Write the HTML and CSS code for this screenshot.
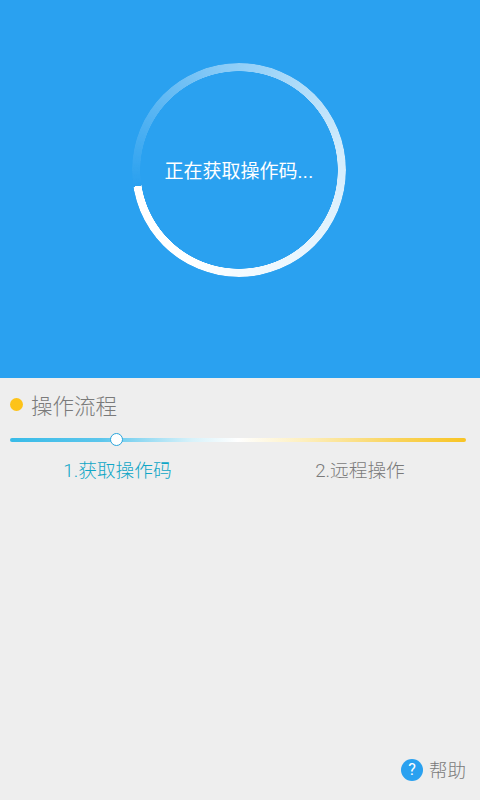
FILE: index.html
```html
<!DOCTYPE html>
<html lang="zh-CN">
<head>
  <meta charset="utf-8">
  <meta name="viewport" content="width=device-width,initial-scale=1" />
  <title>获取操作码</title>
  <link rel="stylesheet" href="styles.css">
</head>

<body>
  <div class="header">
    <div class="ring-box">
      <div class="ring"></div>
      <span class="ring-text">正在获取操作码<span class="dots">...</span></span>
    </div>
  </div>

  <div class="flow">
    <div class="flow-title">
      <span class="dot"></span>
      <span>操作流程</span>
    </div>
    <div class="track">
      <span class="thumb"></span>
    </div>
    <div class="steps">
      <span class="step active">1.获取操作码</span>
      <span class="step">2.远程操作</span>
    </div>
    <div class="help">
      <span class="help-icon">?</span>
      <span class="help-label">帮助</span>
    </div>
  </div>
</body>
</html>
```

FILE: styles.css
```css
html, body {
  height: 100%;
}

body {
  margin: 0;
  display: flex;
  flex-direction: column;
  font-family: Roboto, "Noto Sans CJK SC", sans-serif;
  font-weight: 300;
  background: #eeeeee;
  color: #7a7a7a;
}

.header {
  height: 378px;
  background: #2aa1f0;
  padding-top: 63px;
  box-sizing: border-box;
  display: flex;
  justify-content: center;
}

.ring-box {
  position: relative;
  width: 214px;
  height: 214px;
  margin-left: -2px;
  display: flex;
  align-items: center;
  justify-content: center;
}

.ring {
  position: absolute;
  inset: 0;
  border-radius: 50%;
  background: conic-gradient(from 261deg, rgba(255,255,255,0) 0%, rgba(255,255,255,0.45) 25%, rgba(255,255,255,0.8) 50%, #fff 85%, #fff 100%);
  -webkit-mask: radial-gradient(circle, transparent 98.5px, #000 99px);
  mask: radial-gradient(circle, transparent 98.5px, #000 99px);
}

.ring-text {
  padding-top: 4px;
  color: #fff;
  font-size: 19px;
  font-weight: 400;
  line-height: 24px;
  white-space: nowrap;
}

.dots {
  letter-spacing: 0.3px;
}

.flow {
  flex: 1;
  display: flex;
  flex-direction: column;
}

.flow-title {
  display: flex;
  align-items: center;
  height: 30px;
  margin-top: 11px;
  padding-left: 10px;
  font-size: 21.5px;
}

.dot {
  width: 13px;
  height: 13px;
  margin-top: 1px;
  margin-right: 8px;
  border-radius: 50%;
  background: #fdc319;
}

.track {
  position: relative;
  height: 4px;
  margin: 19px 14px 0 10px;
  border-radius: 2px;
  background: linear-gradient(to right, #38bbe8 0%, #5cc6ec 20%, #d8f2fa 40%, #ffffff 50%, #fdeebb 65%, #f9d35a 85%, #f8c424 100%);
}

.thumb {
  position: absolute;
  left: 100px;
  top: -5px;
  width: 11px;
  height: 11px;
  border: 1.5px solid #2aa5dc;
  border-radius: 50%;
  background: #fff;
}

.steps {
  display: grid;
  grid-template-columns: 215px 240px;
  column-gap: 15px;
  margin-top: 16px;
  padding-left: 10px;
  font-size: 18.7px;
  line-height: 26px;
}

.step {
  text-align: center;
}

.step.active {
  color: #0fa6c6;
}

.help {
  display: flex;
  align-items: center;
  justify-content: flex-end;
  margin-top: auto;
  margin-bottom: 15px;
  padding-right: 14px;
  font-size: 18.5px;
  line-height: 28px;
}

.help-label {
  padding-top: 2px;
}

.help-icon {
  width: 22px;
  height: 22px;
  margin-right: 6px;
  border-radius: 50%;
  background: #2aa1f0;
  color: #fff;
  font-size: 16px;
  font-weight: 400;
  line-height: 22px;
  text-align: center;
}
```
